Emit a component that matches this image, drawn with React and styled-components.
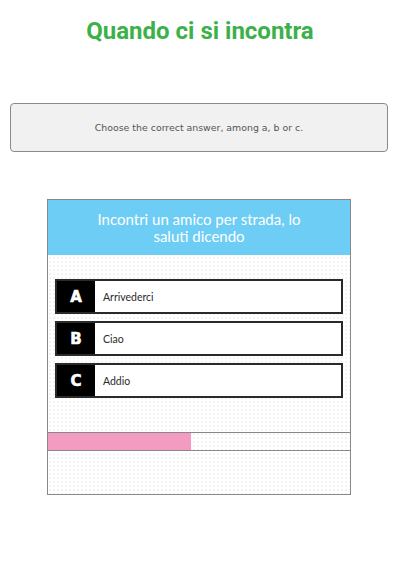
import React from "react";
import styled, { createGlobalStyle } from "styled-components";

const GlobalStyle = createGlobalStyle`
  body {
    margin: 0;
    background: #fff;
    font-family: "Open Sans", sans-serif;
  }
`;

const Page = styled.div`
  width: 400px;
  display: flex;
  flex-direction: column;
  padding-top: 16px;
`;

const Title = styled.h1`
  margin: 0;
  text-align: center;
  font-family: Roboto, sans-serif;
  font-weight: 700;
  font-size: 24px;
  line-height: 30px;
  color: #3cb14a;
`;

const Instructions = styled.div`
  margin: 57px 12px 0 10px;
  height: 49px;
  box-sizing: border-box;
  border: 1px solid #8a8a8a;
  border-radius: 4px;
  background: #f1f1f1;
  display: flex;
  align-items: center;
  justify-content: center;
  font-family: "DejaVu Sans", sans-serif;
  font-size: 9.4px;
  color: #555;
`;

const Card = styled.div`
  margin: 47px 0 0 47px;
  width: 304px;
  height: 296px;
  box-sizing: border-box;
  border: 1px solid #888;
  background-color: #fff;
  background-image: radial-gradient(#e6e6e6 0.6px, transparent 0.8px);
  background-size: 4px 4px;
  display: flex;
  flex-direction: column;
`;

const Question = styled.div`
  height: 55px;
  background: #6dcdf4;
  color: #fff;
  font-family: Lato, sans-serif;
  font-size: 15px;
  line-height: 17px;
  text-align: center;
  display: flex;
  align-items: center;
  justify-content: center;
  padding: 0 40px;
`;

const Options = styled.div`
  display: flex;
  flex-direction: column;
  gap: 7px;
  padding: 24px 7px 0 7px;
`;

const Option = styled.div`
  height: 35px;
  box-sizing: border-box;
  border: 2px solid #2a2a2a;
  background: #fff;
  display: flex;
  align-items: center;
`;

const Letter = styled.div`
  width: 38px;
  align-self: stretch;
  background: #000;
  color: #fff;
  font-family: "DejaVu Sans", sans-serif;
  font-weight: 900;
  font-size: 15px;
  -webkit-text-stroke: 0.6px #fff;
  display: flex;
  align-items: center;
  justify-content: center;
`;

const Answer = styled.span`
  padding-left: 8px;
  font-family: Lato, sans-serif;
  font-size: 10.5px;
  color: #2a2a2a;
`;

const Progress = styled.div`
  margin-top: 34px;
  height: 19px;
  box-sizing: border-box;
  border-top: 1px solid #888;
  border-bottom: 1px solid #888;
`;

const Fill = styled.div`
  height: 100%;
  background: #f39bc1;
`;

const options = [
  { letter: "A", text: "Arrivederci" },
  { letter: "B", text: "Ciao" },
  { letter: "C", text: "Addio" },
];

export default function App() {
  return (
    <Page>
      <GlobalStyle />
      <Title>Quando ci si incontra</Title>
      <Instructions>Choose the correct answer, among a, b or c.</Instructions>
      <Card>
        <Question>Incontri un amico per strada, lo saluti dicendo</Question>
        <Options>
          {options.map((o) => (
            <Option key={o.letter}>
              <Letter>{o.letter}</Letter>
              <Answer>{o.text}</Answer>
            </Option>
          ))}
        </Options>
        <Progress>
          <Fill style={{ width: `${(143 / 302) * 100}%` }} />
        </Progress>
      </Card>
    </Page>
  );
}
